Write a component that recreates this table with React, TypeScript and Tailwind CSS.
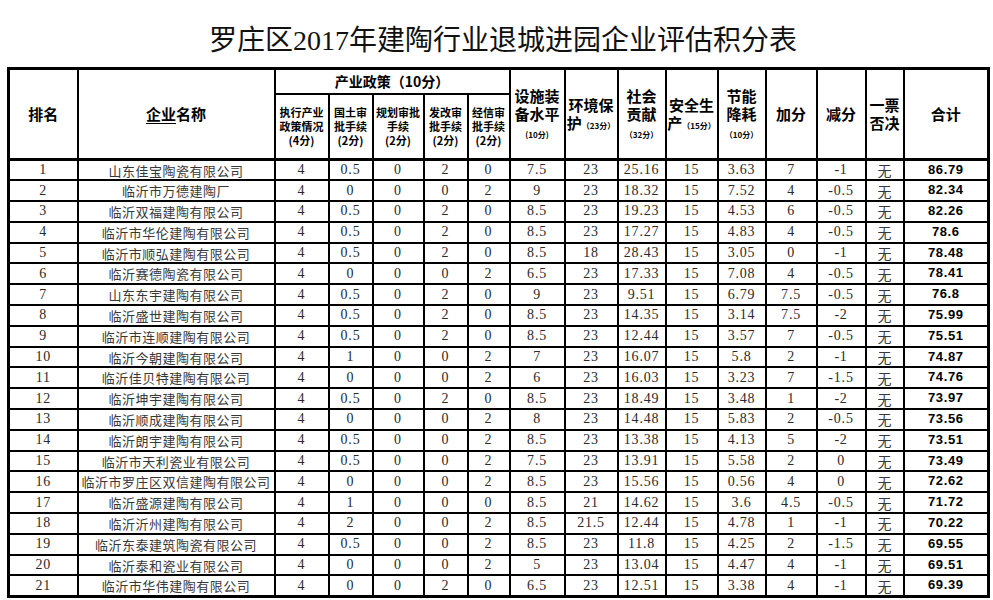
import React from "react";

type Row = [string, string, string, string, string, string, string, string, string, string, string, string, string, string, string, string];

const rows: Row[] = [
  ["1", "山东佳宝陶瓷有限公司", "4", "0.5", "0", "2", "0", "7.5", "23", "25.16", "15", "3.63", "7", "-1", "无", "86.79"],
  ["2", "临沂市万德建陶厂", "4", "0", "0", "0", "2", "9", "23", "18.32", "15", "7.52", "4", "-0.5", "无", "82.34"],
  ["3", "临沂双福建陶有限公司", "4", "0.5", "0", "2", "0", "8.5", "23", "19.23", "15", "4.53", "6", "-0.5", "无", "82.26"],
  ["4", "临沂市华伦建陶有限公司", "4", "0.5", "0", "2", "0", "8.5", "23", "17.27", "15", "4.83", "4", "-0.5", "无", "78.6"],
  ["5", "临沂市顺弘建陶有限公司", "4", "0.5", "0", "2", "0", "8.5", "18", "28.43", "15", "3.05", "0", "-1", "无", "78.48"],
  ["6", "临沂赛德陶瓷有限公司", "4", "0", "0", "0", "2", "6.5", "23", "17.33", "15", "7.08", "4", "-0.5", "无", "78.41"],
  ["7", "山东东宇建陶有限公司", "4", "0.5", "0", "2", "0", "9", "23", "9.51", "15", "6.79", "7.5", "-0.5", "无", "76.8"],
  ["8", "临沂盛世建陶有限公司", "4", "0.5", "0", "2", "0", "8.5", "23", "14.35", "15", "3.14", "7.5", "-2", "无", "75.99"],
  ["9", "临沂市连顺建陶有限公司", "4", "0.5", "0", "2", "0", "8.5", "23", "12.44", "15", "3.57", "7", "-0.5", "无", "75.51"],
  ["10", "临沂今朝建陶有限公司", "4", "1", "0", "0", "2", "7", "23", "16.07", "15", "5.8", "2", "-1", "无", "74.87"],
  ["11", "临沂佳贝特建陶有限公司", "4", "0", "0", "0", "2", "6", "23", "16.03", "15", "3.23", "7", "-1.5", "无", "74.76"],
  ["12", "临沂坤宇建陶有限公司", "4", "0.5", "0", "2", "0", "8.5", "23", "18.49", "15", "3.48", "1", "-2", "无", "73.97"],
  ["13", "临沂顺成建陶有限公司", "4", "0", "0", "0", "2", "8", "23", "14.48", "15", "5.83", "2", "-0.5", "无", "73.56"],
  ["14", "临沂朗宇建陶有限公司", "4", "0.5", "0", "0", "2", "8.5", "23", "13.38", "15", "4.13", "5", "-2", "无", "73.51"],
  ["15", "临沂市天利瓷业有限公司", "4", "0.5", "0", "0", "2", "7.5", "23", "13.91", "15", "5.58", "2", "0", "无", "73.49"],
  ["16", "临沂市罗庄区双信建陶有限公司", "4", "0", "0", "0", "2", "8.5", "23", "15.56", "15", "0.56", "4", "0", "无", "72.62"],
  ["17", "临沂盛源建陶有限公司", "4", "1", "0", "0", "0", "8.5", "21", "14.62", "15", "3.6", "4.5", "-0.5", "无", "71.72"],
  ["18", "临沂沂州建陶有限公司", "4", "2", "0", "0", "2", "8.5", "21.5", "12.44", "15", "4.78", "1", "-1", "无", "70.22"],
  ["19", "临沂东泰建筑陶瓷有限公司", "4", "0.5", "0", "0", "2", "8.5", "23", "11.8", "15", "4.25", "2", "-1.5", "无", "69.55"],
  ["20", "临沂泰和瓷业有限公司", "4", "0", "0", "0", "2", "5", "23", "13.04", "15", "4.47", "4", "-1", "无", "69.51"],
  ["21", "临沂市华伟建陶有限公司", "4", "0", "0", "2", "0", "6.5", "23", "12.51", "15", "3.38", "4", "-1", "无", "69.39"],
];

const cell = "border-2 border-black p-0 text-center align-middle";
const th = "border-2 border-black p-0 text-center align-middle font-bold text-black font-['Noto_Sans_CJK_SC',sans-serif]";
const num = "font-['Liberation_Serif','Noto_Sans_CJK_SC',serif] text-[14px] tracking-[0.8px] text-[#2a2a2a] leading-none";

function Small({ children }: { children: React.ReactNode }) {
  return <span className="text-[8px] leading-none">{children}</span>;
}

export default function App() {
  return (
    <div className="w-[993px] h-[600px] bg-white overflow-hidden">
      <div className="h-[67px] pt-[27px] pl-[13px] text-center text-[28px] leading-[28px] text-[#111] font-['Liberation_Serif','Noto_Sans_CJK_SC',serif]">
        罗庄区2017年建陶行业退城进园企业评估积分表
      </div>
      <table className="table-fixed border-collapse w-[980px] ml-[7px] border-[3px] border-black">
        <colgroup>
          <col className="w-[69px]" />
          <col className="w-[197px]" />
          <col className="w-[54px]" />
          <col className="w-[44px]" />
          <col className="w-[51px]" />
          <col className="w-[44px]" />
          <col className="w-[42px]" />
          <col className="w-[55px]" />
          <col className="w-[53px]" />
          <col className="w-[48px]" />
          <col className="w-[52px]" />
          <col className="w-[48px]" />
          <col className="w-[51px]" />
          <col className="w-[49px]" />
          <col className="w-[38px]" />
          <col className="w-[85px]" />
        </colgroup>
        <thead>
          <tr className="h-[25px]">
            <th rowSpan={2} className={`${th} text-[15px] border-b-[3px]`}>排名</th>
            <th rowSpan={2} className={`${th} text-[15px] border-b-[3px]`}>
              <span className="underline underline-offset-[3px]">企业</span>名称
            </th>
            <th colSpan={5} className={`${th} text-[14px]`}>产业政策（10分）</th>
            <th rowSpan={2} className={`${th} text-[15px] leading-[18px] border-b-[3px]`}>
              设施装<br />备水平<br /><Small>(10分)</Small>
            </th>
            <th rowSpan={2} className={`${th} text-[15px] leading-[18px] border-b-[3px]`}>
              环境保<br />护<Small>（23分）</Small>
            </th>
            <th rowSpan={2} className={`${th} text-[15px] leading-[18px] border-b-[3px]`}>
              社会<br />贡献<br /><Small>（32分）</Small>
            </th>
            <th rowSpan={2} className={`${th} text-[15px] leading-[18px] border-b-[3px]`}>
              安全生<br />产<Small>（15分）</Small>
            </th>
            <th rowSpan={2} className={`${th} text-[15px] leading-[18px] border-b-[3px]`}>
              节能<br />降耗<br /><Small>（10分）</Small>
            </th>
            <th rowSpan={2} className={`${th} text-[15px] border-b-[3px]`}>加分</th>
            <th rowSpan={2} className={`${th} text-[15px] border-b-[3px]`}>减分</th>
            <th rowSpan={2} className={`${th} text-[15px] leading-[18px] border-b-[3px]`}>
              一票<br />否决
            </th>
            <th rowSpan={2} className={`${th} text-[15px] border-b-[3px]`}>合计</th>
          </tr>
          <tr className="h-[66px]">
            <th className={`${th} text-[11px] leading-[14px] border-b-[3px]`}>执行产业<br />政策情况<br />(4分)</th>
            <th className={`${th} text-[11px] leading-[14px] border-b-[3px]`}>国土审<br />批手续<br />(2分)</th>
            <th className={`${th} text-[11px] leading-[14px] border-b-[3px]`}>规划审批<br />手续<br />(2分)</th>
            <th className={`${th} text-[11px] leading-[14px] border-b-[3px]`}>发改审<br />批手续<br />(2分)</th>
            <th className={`${th} text-[11px] leading-[14px] border-b-[3px]`}>经信审<br />批手续<br />(2分)</th>
          </tr>
        </thead>
        <tbody>
          {rows.map((r) => (
            <tr key={r[0]} className="h-[20.8px]">
              <td className={`${cell} ${num}`}>{r[0]}</td>
              <td className={`${cell} text-[13px] tracking-[0.5px] leading-none font-normal text-[#383838] font-['Noto_Sans_CJK_SC',sans-serif]`}>{r[1]}</td>
              {r.slice(2, 14).map((v, i) => (
                <td key={i} className={`${cell} ${num}`}>{v}</td>
              ))}
              <td className={`${cell} align-bottom text-[14px] leading-[16px] font-normal text-[#383838] font-['Noto_Sans_CJK_SC',sans-serif]`}>{r[14]}</td>
              <td className={`${cell} align-bottom pb-[1px] text-[13px] leading-[14px] font-bold text-black tracking-[0.6px] font-['Liberation_Sans',sans-serif]`}>{r[15]}</td>
            </tr>
          ))}
        </tbody>
      </table>
    </div>
  );
}
